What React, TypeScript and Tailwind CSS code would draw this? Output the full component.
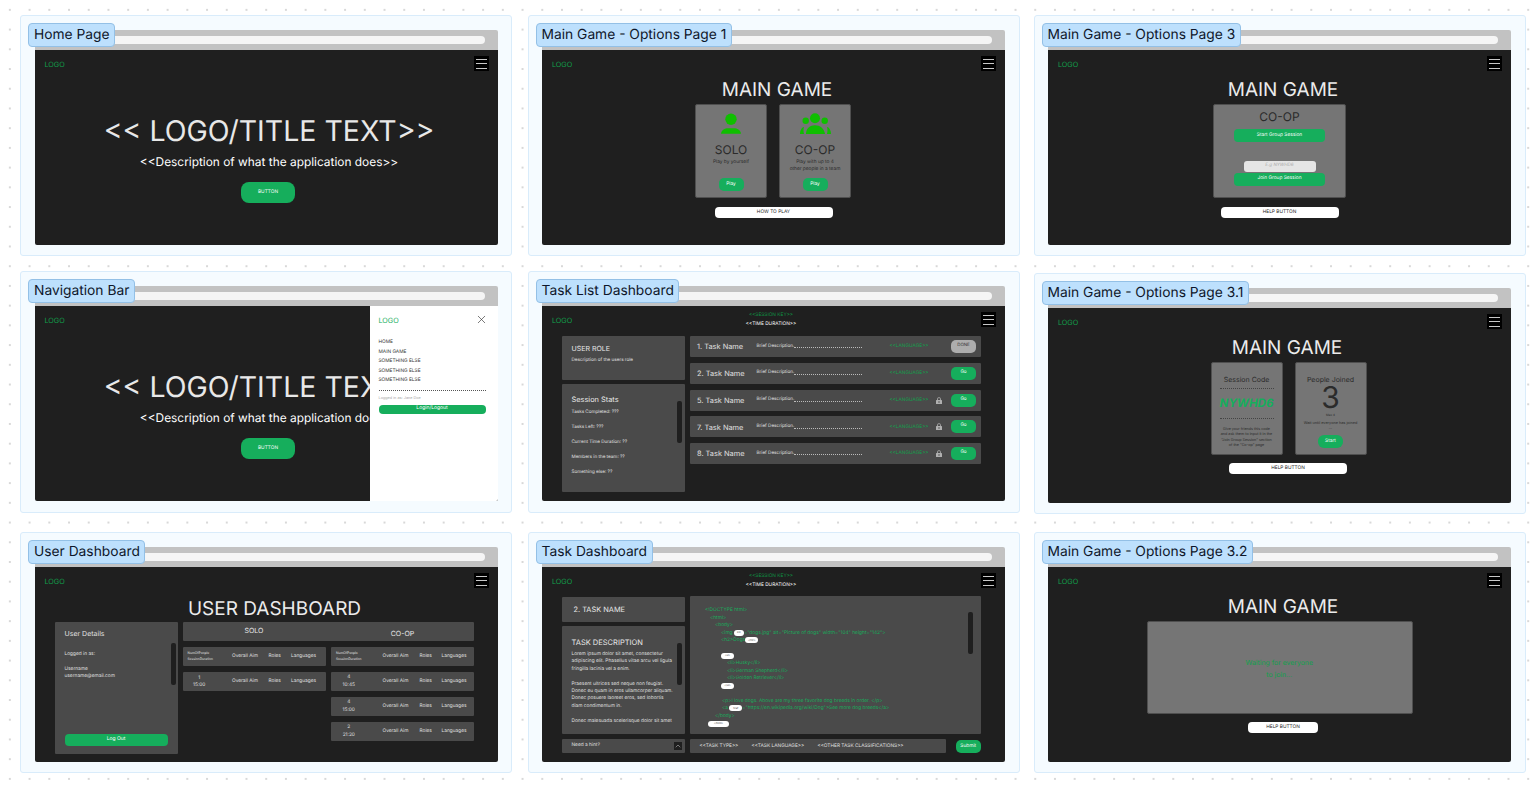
import type { ReactNode } from "react"
import { ChevronUp, X } from "lucide-react"

function Frame({ title, className = "", children }: { title: string; className?: string; children: ReactNode }) {
  return (
    <div className={`relative w-[492px] pl-[13.5px] pt-[14px] bg-[#f5fbff] border border-[#d9ecfb] rounded-[3px] ${className}`}>
      <div className="absolute left-[7px] top-[7px] z-10 h-[24px] pl-[5px] pr-[4.5px] pt-[1px] flex items-center whitespace-nowrap text-[13.8px] leading-none text-[#0f172a] bg-[#bde0fd] border border-[#93c0e6] rounded-[4px]">
        {title}
      </div>
      <div className="w-[463px] h-[20px] pt-[6px] pr-[13px] bg-[#c2c2c2] rounded-t-[2px]">
        <div className="h-[8px] bg-[#f5f5f5] rounded-full" />
      </div>
      <div className="relative w-[463px] h-[195px] overflow-hidden bg-[#1f1f1f] rounded-b-[2px] flex flex-col">{children}</div>
    </div>
  )
}

function Nav({ session = false, menu = true }: { session?: boolean; menu?: boolean }) {
  return (
    <div className="mt-[6px] h-[15px] pl-[10px] pr-[9px] flex items-center justify-between shrink-0">
      <span className="w-[21px] pt-[2px] text-[7.2px] leading-none text-[#11a04c]">LOGO</span>
      {session && (
        <div className="flex flex-col items-center text-[4.8px] leading-[8.5px] mr-[12px]">
          <span className="text-[#0f9445]">{"<<SESSION KEY>>"}</span>
          <span className="text-white">{"<<TIME DURATION>>"}</span>
        </div>
      )}
      {menu ? (
        <div className="w-[15px] h-[15px] bg-black flex flex-col justify-center gap-[3.5px] px-[2px]">
          <div className="h-px bg-[#c8c8c8]" />
          <div className="h-px bg-[#c8c8c8]" />
          <div className="h-px bg-[#c8c8c8]" />
        </div>
      ) : (
        <div className="w-[15px]" />
      )}
    </div>
  )
}

function GreenBtn({ className = "", children }: { className?: string; children: ReactNode }) {
  return <div className={`bg-[#16ae5c] text-white flex items-center justify-center whitespace-nowrap ${className}`}>{children}</div>
}

function HelpBtn({ className = "", children }: { className?: string; children: ReactNode }) {
  return (
    <div className={`h-[11px] pt-[1px] bg-white rounded-[4px] flex items-center justify-center text-[4.8px] text-[#222] whitespace-nowrap ${className}`}>
      {children}
    </div>
  )
}

function Hero() {
  return (
    <div className="pl-[6px] flex flex-col items-center whitespace-nowrap">
      <div className="mt-[41px] pt-[2px] text-[28.5px] leading-[34px] text-[#e8e8e8]">{"<< LOGO/TITLE TEXT>>"}</div>
      <div className="mt-[5px] pt-[2px] text-[11.9px] leading-[14px] text-white">{"<<Description of what the application does>>"}</div>
      <GreenBtn className="mt-[13px] -ml-[2px] w-[54px] h-[21px] rounded-[8px] text-[4.8px]">BUTTON</GreenBtn>
    </div>
  )
}

function SoloIcon() {
  return (
    <svg width="24" height="24" viewBox="0 0 24 24" fill="#0fbf00">
      <circle cx="12" cy="7.3" r="5.7" />
      <path d="M2 21.7C2.5 18 6 16.3 9 16.3L15 16.3C18 16.3 21.5 18 22 21.7Z" />
    </svg>
  )
}

function CoopIcon() {
  return (
    <svg width="34" height="24" viewBox="0 0 34 24" fill="#0fbf00">
      <circle cx="17" cy="6.3" r="5" />
      <circle cx="7.7" cy="8.7" r="3.2" />
      <circle cx="26.7" cy="8.7" r="3.2" />
      <path d="M8 22C8 16.5 12 13.3 17 13.3C22 13.3 26 16.5 27 22Z" />
      <path d="M2 22C2 18.5 3.5 15.5 6 15C5.2 17 5.5 20 6 22Z" />
      <path d="M33 22C33 18.5 31.5 15.5 29 15C29.8 17 29.5 20 29 22Z" />
    </svg>
  )
}

function LockIcon() {
  return (
    <svg width="6" height="7" viewBox="0 0 6 7" fill="#b0b0b0">
      <path d="M1.2 3V2a1.8 1.8 0 0 1 3.6 0v1H4V2a1 1 0 0 0-2 0v1Z" />
      <rect x="0" y="3" width="6" height="4" rx="0.5" />
      <rect x="2.5" y="4.2" width="1" height="1.6" fill="#4a4a4a" />
    </svg>
  )
}

function PlayCard({ icon, name, children }: { icon: ReactNode; name: string; children: ReactNode }) {
  return (
    <div className="w-[72px] h-[93.5px] pt-[7px] pb-[5.5px] bg-[#757575] border border-[#4f4f4f] rounded-[2px] flex flex-col items-center">
      {icon}
      <div className="mt-[7px] text-[12px] leading-[14px] text-[#2b2b2b]">{name}</div>
      <div className="mt-[2px] text-[4.8px] leading-[7.3px] text-[#2b2b2b] text-center whitespace-nowrap">{children}</div>
      <GreenBtn className="mt-auto w-[25px] h-[13px] rounded-[5px] text-[4.8px]">Play</GreenBtn>
    </div>
  )
}

function MainTitle({ className = "mt-[6px]" }: { className?: string }) {
  return <div className={`${className} pl-[7px] pt-[2px] text-center text-[19px] leading-[22px] text-[#ececec]`}>MAIN GAME</div>
}

function Options1() {
  return (
    <>
      <Nav />
      <MainTitle />
      <div className="mt-[3px] pr-[1px] flex justify-center gap-[12px]">
        <PlayCard icon={<SoloIcon />} name="SOLO">Play by yourself</PlayCard>
        <PlayCard icon={<CoopIcon />} name="CO-OP">Play with up to 4<br />other people in a team</PlayCard>
      </div>
      <HelpBtn className="mt-[9.5px] mx-auto w-[118px]">HOW TO PLAY</HelpBtn>
    </>
  )
}

function Options3() {
  return (
    <>
      <Nav />
      <MainTitle />
      <div className="mt-[3px] mx-auto w-[133px] h-[93.5px] pt-[5px] bg-[#757575] border border-[#4f4f4f] rounded-[2px] flex flex-col items-center">
        <div className="text-[12px] leading-[14px] text-[#2b2b2b]">CO-OP</div>
        <GreenBtn className="mt-[5px] w-[91px] h-[13px] rounded-[4px] text-[4.8px]">Start Group Session</GreenBtn>
        <div className="mt-[19px] w-[72px] h-[11px] bg-[#e5e5e5] rounded-[3px] flex items-center justify-center text-[4.5px] italic text-[#ababab]">E.g NYWHD6</div>
        <GreenBtn className="mt-[0.5px] w-[91px] h-[13px] rounded-[4px] text-[4.8px]">Join Group Session</GreenBtn>
      </div>
      <HelpBtn className="mt-[9.5px] mx-auto w-[118px]">HELP BUTTON</HelpBtn>
    </>
  )
}

function NavDrawer() {
  return (
    <div className="absolute right-0 top-0 bottom-0 w-[128px] bg-white pl-[9px] pr-[12px] pt-[9px]">
      <div className="flex items-center justify-between">
        <span className="text-[7.2px] leading-[8px] text-[#16ae5c]">LOGO</span>
        <X size={13} strokeWidth={1.2} className="text-[#333] -mt-[2px] -mr-[2px]" />
      </div>
      <div className="mt-[12px] text-[4.8px] leading-[9.5px] text-[#333] whitespace-nowrap">
        <div>HOME</div>
        <div>MAIN GAME</div>
        <div>SOMETHING ELSE</div>
        <div>SOMETHING ELSE</div>
        <div>SOMETHING ELSE</div>
      </div>
      <div className="mt-[4px] border-t border-dotted border-[#555]" />
      <div className="mt-[4px] text-[3.8px] leading-[5px] text-[#a8a8a8]">Logged in as: Jane Doe</div>
      <GreenBtn className="mt-[5px] h-[9px] rounded-[4px] text-[5px]">Login/Logout</GreenBtn>
    </div>
  )
}

function TaskRow({ name, done = false, locked = false }: { name: string; done?: boolean; locked?: boolean }) {
  return (
    <div className="h-[21px] pl-[7.5px] pr-[5px] bg-[#4a4a4a] rounded-[1px] flex items-center whitespace-nowrap">
      <div className="w-[59.5px] pt-[1px] text-[7.4px] text-[#e0e0e0]">{name}</div>
      <div className="w-[105px] mr-[28px] pt-[1px] flex items-end text-[4.6px] text-[#e0e0e0]">
        <span>Brief Description.</span>
        <div className="flex-1 mb-[2px] border-b border-dotted border-[#bbb]" />
      </div>
      <div className="w-[46.5px] pt-[1px] text-[4.8px] text-[#11a04c]">{"<<LANGUAGE>>"}</div>
      {locked && <LockIcon />}
      {done ? (
        <div className="ml-auto w-[25px] h-[13px] rounded-[5px] bg-[#adadad] flex items-center justify-center text-[4.4px] text-[#333]">DONE</div>
      ) : (
        <GreenBtn className="ml-auto w-[25px] h-[13px] rounded-[5px] text-[4.6px]">Go</GreenBtn>
      )}
    </div>
  )
}

function ScrollBar({ className = "" }: { className?: string }) {
  return <div className={`absolute w-[5px] h-[42px] rounded-[2px] bg-[#1f1f1f] ${className}`} />
}

function TaskList() {
  return (
    <>
      <Nav session />
      <div className="mt-[9px] ml-[19.5px] flex gap-[4.5px]">
        <div className="w-[123.5px] flex flex-col gap-[4.5px]">
          <div className="h-[43.5px] pl-[10px] pt-[9px] bg-[#4a4a4a] rounded-[1px]">
            <div className="text-[7px] leading-[8px] text-[#e8e8e8]">USER ROLE</div>
            <div className="mt-[5px] text-[4.6px] leading-[6px] text-[#e0e0e0]">Description of the users role</div>
          </div>
          <div className="relative h-[108px] pl-[10px] pt-[11px] bg-[#4a4a4a] rounded-[1px]">
            <div className="text-[7.4px] leading-[9px] text-[#e8e8e8]">Session Stats</div>
            <div className="mt-[6px] flex flex-col gap-[8.9px] text-[4.6px] leading-[6px] text-[#e0e0e0]">
              <div>Tasks Completed: ???</div>
              <div>Tasks Left: ???</div>
              <div>Current Time Duration: ??</div>
              <div>Members in the team: ??</div>
              <div>Something else: ??</div>
            </div>
            <ScrollBar className="left-[115.5px] top-[17px]" />
          </div>
        </div>
        <div className="w-[291.5px] flex flex-col gap-[5.75px]">
          <TaskRow name="1. Task Name" done />
          <TaskRow name="2. Task Name" />
          <TaskRow name="5. Task Name" locked />
          <TaskRow name="7. Task Name" locked />
          <TaskRow name="8. Task Name" locked />
        </div>
      </div>
    </>
  )
}

function Options31() {
  return (
    <>
      <Nav />
      <div className="mt-[5.5px] pl-[15px] pt-[2px] text-center text-[19px] leading-[22px] text-[#ececec]">MAIN GAME</div>
      <div className="mt-[3px] ml-[162.5px] flex gap-[12px]">
        <div className="w-[72px] h-[93.5px] pt-[13px] px-[8px] bg-[#757575] border border-[#4f4f4f] rounded-[2px] flex flex-col items-center text-[#2b2b2b] whitespace-nowrap">
          <div className="text-[7px] leading-[8px]">Session Code</div>
          <div className="mt-[4.5px] w-full border-t border-dotted border-[#444]" />
          <div className="mt-[7px] -mx-[8px] text-[11.6px] leading-[15px] font-bold italic text-[#16ae5c]">NYWHD6</div>
          <div className="mt-[6.5px] w-full border-t border-dotted border-[#444]" />
          <div className="mt-[7px] text-center text-[3.7px] leading-[5.5px]">
            Give your friends this code<br />and ask them to input it in the<br />"Join Group Session" section<br />of the "Co-op" page
          </div>
        </div>
        <div className="w-[72px] h-[93.5px] pt-[13px] pb-[6px] bg-[#757575] border border-[#4f4f4f] rounded-[2px] flex flex-col items-center text-[#2b2b2b] whitespace-nowrap">
          <div className="text-[7px] leading-[8px]">People Joined</div>
          <div className="mt-[1px] text-[30px] leading-[26px]">3</div>
          <div className="mt-[2px] text-[3px] leading-[4px]">Max 4</div>
          <div className="mt-[3.5px] text-[3.8px] leading-[5px]">Wait until everyone has joined</div>
          <div className="mt-[1px] text-[3.8px] leading-[4px]">...</div>
          <GreenBtn className="mt-auto w-[25.5px] h-[13px] rounded-[6px] text-[4.8px]">Start</GreenBtn>
        </div>
      </div>
      <HelpBtn className="mt-[7.5px] ml-[181px] w-[118px]">HELP BUTTON</HelpBtn>
    </>
  )
}

function HistoryRow({ cols, first, second, header = false }: { cols: string; first: string; second: string; header?: boolean }) {
  return (
    <div className={`h-[19px] pt-[1px] bg-[#4a4a4a] rounded-[1px] grid items-center text-[4.8px] text-[#e0e0e0] whitespace-nowrap ${cols}`}>
      {header ? (
        <div className="pl-[5px] text-[3.3px] leading-[5.5px]">{first}<br />{second}</div>
      ) : (
        <div className="pr-[16px] text-center text-[4.8px] leading-[7.5px]">{first}<br />{second}</div>
      )}
      <div>Overall Aim</div>
      <div>Roles</div>
      <div>Languages</div>
    </div>
  )
}

const SOLO_COLS = "grid-cols-[49.5px_36.5px_22.5px_1fr]"
const COOP_COLS = "grid-cols-[51.5px_37px_22px_1fr]"

function UserDash() {
  return (
    <>
      <Nav />
      <div className="mt-[8px] pl-[17px] pt-[2px] text-center text-[19px] leading-[22px] text-[#ececec]">USER DASHBOARD</div>
      <div className="mt-[2px] ml-[20px] flex gap-[5px]">
        <div className="relative w-[123px] h-[131.5px] pl-[10px] pr-[10px] pt-[8px] pb-[8px] bg-[#4a4a4a] rounded-[1px] flex flex-col text-[#e0e0e0]">
          <div className="text-[7px] leading-[7px]">User Details</div>
          <div className="mt-[14px] text-[4.8px] leading-[7.5px]">Logged in as:</div>
          <div className="mt-[7px] text-[4.8px] leading-[7.5px]">Username<br />username@email.com</div>
          <ScrollBar className="left-[116px] top-[21px]" />
          <GreenBtn className="mt-auto h-[11.5px] rounded-[4px] text-[5px]">Log Out</GreenBtn>
        </div>
        <div className="w-[291.5px]">
          <div className="h-[19px] bg-[#4a4a4a] rounded-[1px] relative text-[7px] text-[#e8e8e8]">
            <div className="flex">
              <div className="w-[143px] pt-[4px] text-center leading-[9px]">SOLO</div>
              <div className="w-[143px] ml-[5.5px] pt-[7px] text-center leading-[9px]">CO-OP</div>
            </div>
          </div>
          <div className="mt-[5.5px] flex gap-[5.5px]">
            <div className="w-[143px] flex flex-col gap-[6.5px]">
              <HistoryRow cols={SOLO_COLS} header first="NumOfPeople" second="SessionDuration" />
              <HistoryRow cols={SOLO_COLS} first="1" second="15:00" />
            </div>
            <div className="w-[143px] flex flex-col gap-[6px]">
              <HistoryRow cols={COOP_COLS} header first="NumOfPeople" second="SessionDuration" />
              <HistoryRow cols={COOP_COLS} first="4" second="10:45" />
              <HistoryRow cols={COOP_COLS} first="4" second="15:00" />
              <HistoryRow cols={COOP_COLS} first="2" second="21:20" />
            </div>
          </div>
        </div>
      </div>
    </>
  )
}

function Pill({ children, className = "w-[13px]" }: { children: string; className?: string }) {
  return (
    <span className={`inline-flex items-center justify-center h-[6px] align-middle rounded-[3px] bg-white text-[2.6px] text-[#333] ${className}`}>
      {children}
    </span>
  )
}

function CodeBlock() {
  return (
    <div className="text-[4.85px] leading-[7.45px] text-[#16ae5c] whitespace-nowrap">
      <div>{"<!DOCTYPE html>"}</div>
      <div className="pl-[5px]">{"<html>"}</div>
      <div className="pl-[10px]">{"<body>"}</div>
      <div className="pl-[16px]">{"<img "}<Pill className="w-[10px]">src</Pill>{"=\"dogs.jpg\" alt=\"Picture of dogs\" width=\"104\" height=\"142\">"}</div>
      <div className="pl-[16px]">{"<h2>Dogs"}<Pill>{"</h2>"}</Pill></div>
      <div className="h-[7.45px]" />
      <div className="pl-[16px]"><Pill>{"<ul>"}</Pill></div>
      <div className="pl-[22px]">{"<li>Husky</li>"}</div>
      <div className="pl-[22px]">{"<li>German Shepherd</li>"}</div>
      <div className="pl-[22px]">{"<li>Golden Retriever</li>"}</div>
      <div className="pl-[16px]"><Pill>{"</ul>"}</Pill></div>
      <div className="h-[7.45px]" />
      <div className="pl-[17px]">{"<p>I love dogs. Above are my three favorite dog breeds in order. </p>"}</div>
      <div className="pl-[17px]">{"<a "}<Pill>href</Pill>{"=\"https://en.wikipedia.org/wiki/Dog\">See more dog breeds</a>"}</div>
      <div className="pl-[10px]">{"</body>"}</div>
      <div className="pl-[3px]"><Pill className="w-[21px]">{"</html>"}</Pill></div>
    </div>
  )
}

function TaskDash() {
  return (
    <>
      <Nav session />
      <div className="mt-[8px] ml-[19.5px] flex gap-[4.5px]">
        <div className="w-[123.5px] pt-[1px] flex flex-col gap-[4.5px]">
          <div className="h-[24.5px] pl-[12px] flex items-center bg-[#4a4a4a] rounded-[1px] text-[7.4px] text-[#e8e8e8]">2. TASK NAME</div>
          <div className="relative h-[108px] pl-[10px] pt-[12px] bg-[#4a4a4a] rounded-[1px] text-[#e0e0e0]">
            <div className="text-[7.5px] leading-[9px] text-[#e8e8e8]">TASK DESCRIPTION</div>
            <div className="mt-[4px] text-[4.8px] leading-[7.4px] whitespace-nowrap">
              Lorem ipsum dolor sit amet, consectetur<br />adipiscing elit. Phasellus vitae arcu vel ligula<br />fringilla lacinia vel a enim.
              <div className="h-[7.4px]" />
              Praesent ultrices sed neque non feugiat.<br />Donec eu quam in eros ullamcorper aliquam.<br />Donec posuere laoreet eros, sed lobortis<br />diam condimentum in.
              <div className="h-[7.4px]" />
              Donec malesuada scelerisque dolor sit amet
            </div>
            <ScrollBar className="left-[115.5px] top-[17px]" />
          </div>
          <div className="h-[14px] pl-[10px] pr-[3px] flex items-center justify-between bg-[#4a4a4a] rounded-[1px] text-[4.8px] text-[#e0e0e0]">
            <span className="pt-[1px]">Need a hint?</span>
            <div className="w-[8px] h-[8px] bg-[#1f1f1f] flex items-center justify-center">
              <ChevronUp size={8} strokeWidth={1.5} className="text-[#d0d0d0]" />
            </div>
          </div>
        </div>
        <div className="w-[291.5px] flex flex-col gap-[5px]">
          <div className="relative h-[138px] pl-[15.5px] pt-[11.3px] bg-[#4a4a4a] rounded-[1px]">
            <CodeBlock />
            <ScrollBar className="left-[278.5px] top-[16px]" />
          </div>
          <div className="flex items-center justify-between">
            <div className="w-[256.5px] h-[14px] pl-[10px] pt-[1px] flex items-center bg-[#4a4a4a] rounded-[1px] text-[4.8px] text-[#e0e0e0] whitespace-nowrap">
              <span className="w-[52px]">{"<<TASK TYPE>>"}</span>
              <span className="w-[66px]">{"<<TASK LANGUAGE>>"}</span>
              <span>{"<<OTHER TASK CLASSIFICATIONS>>"}</span>
            </div>
            <GreenBtn className="w-[25.5px] h-[13px] pt-[1px] rounded-[5px] text-[4.8px]">Submit</GreenBtn>
          </div>
        </div>
      </div>
    </>
  )
}

function Options32() {
  return (
    <>
      <Nav />
      <MainTitle className="mt-[6px]" />
      <div className="mt-[2.5px] ml-[98.5px] w-[266.5px] h-[93.5px] bg-[#757575] border border-[#4f4f4f] rounded-[2px] flex items-center justify-center text-center text-[6.9px] leading-[11.3px] text-[#11a04c]">
        <div className="mt-[3px] -ml-[1px]">Waiting for everyone<br />to join...</div>
      </div>
      <HelpBtn className="mt-[8px] ml-[200px] w-[70px]">HELP BUTTON</HelpBtn>
    </>
  )
}

export default function App() {
  return (
    <div className="w-[1538px] h-[791px] overflow-hidden bg-white bg-[radial-gradient(#d8d8d8_0.7px,transparent_0.9px)] bg-[size:19.72px_19.72px] font-[Inter,sans-serif] [text-rendering:geometricPrecision]">
      <div className="pl-[20px] pt-[15px] grid grid-cols-[507.5px_506px_493px] grid-rows-[256px_261px_241px]">
        <Frame title="Home Page" className="h-[241px]">
          <Nav />
          <Hero />
        </Frame>
        <Frame title="Main Game - Options Page 1" className="h-[241px]">
          <Options1 />
        </Frame>
        <Frame title="Main Game - Options Page 3" className="h-[241px]">
          <Options3 />
        </Frame>
        <Frame title="Navigation Bar" className="h-[242px]">
          <Nav menu={false} />
          <Hero />
          <NavDrawer />
        </Frame>
        <Frame title="Task List Dashboard" className="h-[242px]">
          <TaskList />
        </Frame>
        <Frame title="Main Game - Options Page 3.1" className="h-[241px] mt-[2px]">
          <Options31 />
        </Frame>
        <Frame title="User Dashboard" className="h-[241px]">
          <UserDash />
        </Frame>
        <Frame title="Task Dashboard" className="h-[241px]">
          <TaskDash />
        </Frame>
        <Frame title="Main Game - Options Page 3.2" className="h-[241px]">
          <Options32 />
        </Frame>
      </div>
    </div>
  )
}
